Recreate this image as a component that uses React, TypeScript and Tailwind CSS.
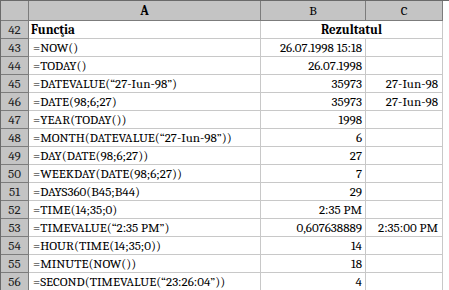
import React from "react";

type Row = {
  n: number;
  a: string;
  b?: string;
  c?: string;
};

const rows: Row[] = [
  { n: 43, a: "=NOW()", b: "26.07.1998 15:18" },
  { n: 44, a: "=TODAY()", b: "26.07.1998" },
  { n: 45, a: "=DATEVALUE(\u201c27-Iun-98\u201d)", b: "35973", c: "27-Iun-98" },
  { n: 46, a: "=DATE(98;6;27)", b: "35973", c: "27-Iun-98" },
  { n: 47, a: "=YEAR(TODAY())", b: "1998" },
  { n: 48, a: "=MONTH(DATEVALUE(\u201c27-Iun-98\u201d))", b: "6" },
  { n: 49, a: "=DAY(DATE(98;6;27))", b: "27" },
  { n: 50, a: "=WEEKDAY(DATE(98;6;27))", b: "7" },
  { n: 51, a: "=DAYS360(B45;B44)", b: "29" },
  { n: 52, a: "=TIME(14;35;0)", b: "2:35 PM" },
  { n: 53, a: "=TIMEVALUE(\u201c2:35 PM\u201d)", b: "0,607638889", c: "2:35:00 PM" },
  { n: 54, a: "=HOUR(TIME(14;35;0))", b: "14" },
  { n: 55, a: "=MINUTE(NOW())", b: "18" },
  { n: 56, a: "=SECOND(TIMEVALUE(\u201c23:26:04\u201d))", b: "4" },
];

const head = "bg-[#c4c4c4] border-r border-b border-[#7c7c7c]";
const cell = "border-r border-b border-[#c8c8c8]";

export default function App() {
  return (
    <div className="w-[449px] h-[290px] bg-white overflow-hidden text-[13px] leading-none text-black border-l border-t border-[#6a6a6a] font-serif">
      {/* Column headers */}
      <div className="flex h-[20px]">
        <div className={`w-[28px] shrink-0 ${head}`} />
        <div className={`w-[232px] shrink-0 ${head} flex items-center justify-center font-bold`}>
          A
        </div>
        <div className={`w-[105px] shrink-0 ${head} flex items-center justify-center`}>
          B
        </div>
        <div className={`w-[77px] shrink-0 ${head} flex items-center justify-center`}>
          C
        </div>
      </div>

      {/* Row 42: title row, B:C merged */}
      <div className="flex h-[18px]">
        <div className={`w-[28px] shrink-0 ${head} flex items-center justify-center text-[#202020]`}>
          42
        </div>
        <div className={`w-[232px] shrink-0 ${cell} flex items-center pl-[2px] font-bold`}>
          Funcţia
        </div>
        <div className={`w-[182px] shrink-0 ${cell} flex items-center justify-center font-bold`}>
          Rezultatul
        </div>
      </div>

      {rows.map((r) => (
        <div key={r.n} className="flex h-[18px]">
          <div className={`w-[28px] shrink-0 ${head} flex items-center justify-center text-[#202020]`}>
            {r.n}
          </div>
          <div className={`w-[232px] shrink-0 ${cell} flex items-center pl-[4px] whitespace-nowrap overflow-hidden`}>
            {r.a}
          </div>
          <div className={`w-[105px] shrink-0 ${cell} flex items-center justify-end pr-[3px] whitespace-nowrap`}>
            {r.b}
          </div>
          <div className={`w-[77px] shrink-0 ${cell} flex items-center justify-end pr-[4px] whitespace-nowrap`}>
            {r.c}
          </div>
        </div>
      ))}
    </div>
  );
}
